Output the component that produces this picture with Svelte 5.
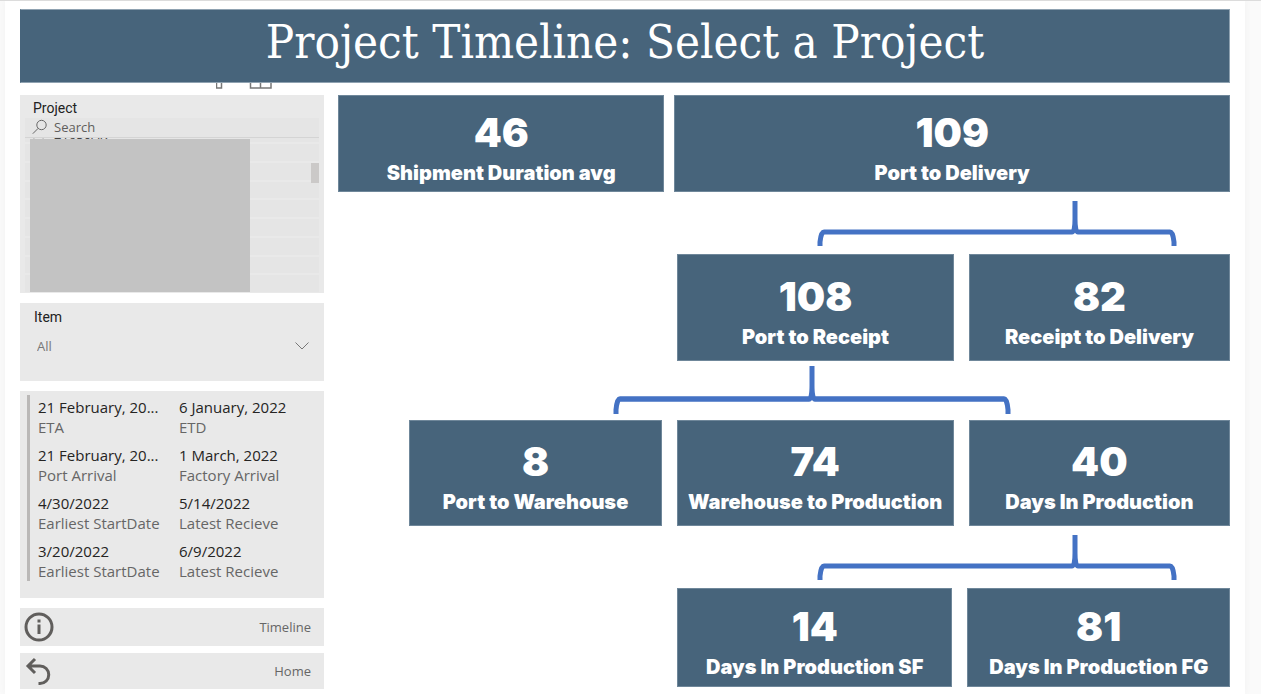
<script>
  const dates = [
    ['21 February, 20...', 'ETA'],
    ['6 January, 2022', 'ETD'],
    ['21 February, 20...', 'Port Arrival'],
    ['1 March, 2022', 'Factory Arrival'],
    ['4/30/2022', 'Earliest StartDate'],
    ['5/14/2022', 'Latest Recieve'],
    ['3/20/2022', 'Earliest StartDate'],
    ['6/9/2022', 'Latest Recieve']
  ];
  const emptyRows = Array(8).fill(0);
</script>

{#snippet card(value, label)}
  <article class="card">
    <strong>{value}</strong>
    <span>{label}</span>
  </article>
{/snippet}

{#snippet bracket(left, mid, right, tall)}
  <svg class="bracket" class:tall viewBox="0 0 892 46" preserveAspectRatio="none" aria-hidden="true">
    <path d="M{left} 45V41Q{left + 1} 31 {left + 4} 31H{mid - 3}Q{mid} 31 {mid} 18V0V18Q{mid} 31 {mid + 3} 31H{right - 4}Q{right - 1} 31 {right} 41V45" />
  </svg>
{/snippet}

<main>
  <header><h1>Project Timeline: Select a Project</h1></header>

  <div class="body">
    <aside>
      <div class="tools" aria-hidden="true">
        <svg width="56" height="6" viewBox="0 0 56 6">
          <path d="M.5 0V5H5.500V0M34.500 0V5H55V0M44.500 0V5" />
        </svg>
      </div>

      <section class="panel project">
        <h2>Project</h2>
        <div class="search">
          <svg width="16" height="16" viewBox="0 0 16 16" aria-hidden="true">
            <circle cx="9.500" cy="6" r="4.700" /><path d="M6.200 9.300L.8 14.700" />
          </svg>
          <input type="text" placeholder="Search" aria-label="Search" />
        </div>
        <div class="list">
          <label class="first"><input type="radio" name="project" /><span>21650AR</span></label>
          {#each emptyRows as _}
            <div class="row"></div>
          {/each}
          <div class="cover"></div>
          <div class="thumb"></div>
        </div>
      </section>

      <section class="panel item">
        <h2><label for="item">Item</label></h2>
        <div class="drop">
          <select id="item"><option>All</option></select>
          <svg width="14" height="8" viewBox="0 0 14 8" aria-hidden="true"><path d="M.5 .5L7 7L13.500 .5" /></svg>
        </div>
      </section>

      <section class="panel dates">
        <dl>
          {#each dates as [value, name]}
            <div><dd>{value}</dd><dt>{name}</dt></div>
          {/each}
        </dl>
      </section>

      <nav>
        <button class="info">
          <svg width="30" height="30" viewBox="0 0 30 30" aria-hidden="true">
            <circle cx="15" cy="15" r="13" /><path d="M15 12.500V22M15 7.500V10.500" />
          </svg>
          Timeline
        </button>
        <button class="home">
          <svg width="30" height="30" viewBox="0 0 30 30" aria-hidden="true">
            <path d="M11 3L4 10L11 17M4 10H16A8.700 8.700 0 0 1 16 27.500H14.500" />
          </svg>
          Home
        </button>
      </nav>
    </aside>

    <div class="tree">
      <div class="level one">{@render card(46, 'Shipment Duration avg')}{@render card(109, 'Port to Delivery')}</div>
      {@render bracket(482, 737, 836, false)}
      <div class="level two">{@render card(108, 'Port to Receipt')}{@render card(82, 'Receipt to Delivery')}</div>
      {@render bracket(278, 474, 670, true)}
      <div class="level three">
        {@render card(8, 'Port to Warehouse')}{@render card(74, 'Warehouse to Production')}{@render card(40, 'Days In Production')}
      </div>
      {@render bracket(482, 737, 836, false)}
      <div class="level four">{@render card(14, 'Days In Production SF')}{@render card(81, 'Days In Production FG')}</div>
    </div>
  </div>
</main>

<style>
  :global(body) {
    margin: 0;
    background: #fafafa;
    font-family: "Open Sans", "Noto Sans", sans-serif;
  }
  * { box-sizing: border-box; }
  main {
    margin: 0 16px 0 5px;
    padding: 8px 15px 5px;
    background: #fff;
    box-shadow: 0 0 8px #0000000a;
    position: relative;
  }
  main::before {
    content: "";
    position: absolute;
    top: 0;
    left: -5px;
    right: -16px;
    height: 1px;
    background: #dcdcdc;
  }
  header {
    margin-top: 1px;
    height: 74px;
    border: 1px solid #8fa2b1;
    border-left-color: #47647b;
    background: #47647b;
    color: #fff;
    text-align: center;
  }
  h1 {
    margin: 0;
    font: 400 47px/64px "DejaVu Serif Condensed", "DejaVu Serif", serif;
    font-stretch: condensed;
    white-space: nowrap;
  }
  .body {
    display: grid;
    grid-template-columns: 304fr 892fr;
    gap: 14px;
  }
  aside { display: flex; flex-direction: column; gap: 10px; min-width: 0; }
  .tools { height: 12px; margin-bottom: -10px; padding-left: 196px; display: flex; align-items: flex-start; }
  svg { fill: none; flex: none; }
  .tools svg { stroke: #777; stroke-width: 1.5; }
  .panel { background: #e9e9e9; }
  h2 {
    margin: 0;
    font: 400 14px/20px Roboto, sans-serif;
    color: #222;
  }
  .project { padding: 3px 5px 2px; height: 198px; }
  .project h2 { padding-left: 8px; }
  .search {
    display: flex;
    align-items: flex-start;
    gap: 6px;
    height: 20px;
    padding-left: 7px;
    background: #e5e5e5;
    border-bottom: 1px solid #d4d4d4;
  }
  .search svg { stroke: #666; margin-top: 1px; }
  input[type="text"] {
    flex: 1;
    min-width: 0;
    height: 18px;
    padding: 0;
    border: 0;
    background: none;
    outline: 0;
    color: #605e5c;
    font: 13px/18px "Open Sans", sans-serif;
  }
  input::placeholder { color: #605e5c; opacity: 1; }
  .list { position: relative; height: 154px; overflow: hidden; display: flex; flex-direction: column; gap: 2px; }
  .first { height: 4px; display: flex; align-items: flex-end; gap: 10px; padding-left: 8px; font-size: 13px; line-height: 16px; color: #444; background: #e5e5e5; flex: none; }
  .first input { appearance: none; margin: 0; width: 11px; height: 11px; border: 1px solid #aaa; border-radius: 50%; }
  .row { flex: 1; background: #e5e5e5; }
  .cover { position: absolute; left: 5px; top: 1px; bottom: 0; width: 220px; background: #c3c3c3; }
  .thumb { position: absolute; right: 0; top: 25px; width: 8px; height: 20px; background: #cbc9c8; }
  .item { height: 78px; padding: 4px 15px 0 14px; }
  .drop { display: flex; align-items: center; margin-top: 7px; height: 24px; }
  select {
    appearance: none;
    flex: 1;
    border: 0;
    padding: 0 3px;
    background: none;
    color: #777;
    font: 13px/20px "Open Sans", sans-serif;
  }
  .drop svg { stroke: #777; }
  .dates { height: 207px; padding: 4px 7px; }
  dl {
    margin: 0;
    height: 186px;
    padding: 2px 0 0 8px;
    border-left: 3px solid #bab8b7;
    display: grid;
    grid-template-columns: 141fr 138fr;
    grid-auto-rows: 48px;
    font-size: 15px;
    line-height: 20px;
    white-space: nowrap;
  }
  dd, dt { margin: 0; }
  dd { color: #252423; }
  dt { color: #666; }
  nav { display: flex; flex-direction: column; gap: 7px; }
  button {
    display: flex;
    justify-content: space-between;
    align-items: center;
    border: 0;
    padding: 0 13px 0 4px;
    height: 38px;
    background: #e9e9e9;
    color: #666;
    font: 13px/18px "Open Sans", sans-serif;
  }
  button svg { stroke: #605e5c; stroke-width: 3; }
  .home { height: 36px; }
  .tree { padding-top: 12px; min-width: 0; }
  .level { display: grid; gap: 15px; }
  .one { grid-template-columns: 326fr 555fr; gap: 10px; height: 97px; }
  .two { grid-template-columns: 277fr 261fr; padding-left: 38%; height: 107px; }
  .three { grid-template-columns: 252fr 277fr 261fr; padding-left: 8%; height: 106px; }
  .four { grid-template-columns: 275fr 262fr; padding-left: 38%; height: 99px; }
  .card {
    display: flex;
    flex-direction: column;
    align-items: center;
    justify-content: center;
    gap: 6px;
    padding-top: 8px;
    border: 1px solid #6f879a;
    background: #47647b;
    color: #fff;
    font-family: Inter, "Liberation Sans", sans-serif;
    font-weight: 900;
    white-space: nowrap;
  }
  .card strong { font-size: 40px; line-height: 44px; font-weight: 900; }
  .card span { font-size: 20px; line-height: 24px; }
  .bracket {
    display: block;
    width: 100%;
    height: 46px;
    margin: 9px 0 7px;
    stroke: #4472c4;
    stroke-width: 5;
  }
  .bracket.tall { height: 49px; margin: 5px 0; }
</style>
